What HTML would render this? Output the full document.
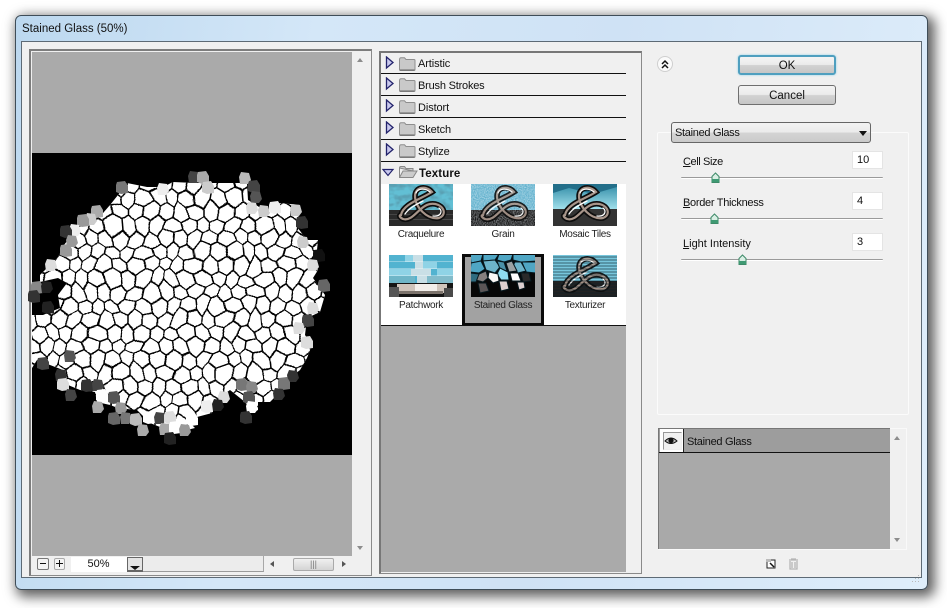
<!DOCTYPE html>
<html><head><meta charset="utf-8"><title>Stained Glass</title>
<style>
html,body{margin:0;padding:0;background:#fff}
body{width:947px;height:608px;position:relative;overflow:hidden;font:11px "Liberation Sans",sans-serif;color:#111}
div,span.a{position:absolute;box-sizing:border-box}
.t{white-space:nowrap;line-height:14px}
.win{left:15px;top:15px;width:913px;height:575px;border:1px solid #3f4d58;border-radius:6px;background:linear-gradient(100deg,#bcd8ef 0,#d4e7f8 30%,#cfe2f5 60%,#dfeefb 100%);box-shadow:4px 4px 12px 3px rgba(0,0,0,.62)}
.client{left:21px;top:41px;width:901px;height:537px;background:#f0f0f0;border:1px solid #5d6a75}
.row{left:381px;width:245px;height:22px;background:#f0f0f0;border-bottom:1.5px solid #111}
.row .t{left:37px;top:5px;letter-spacing:-.1px}
.btn{left:738px;width:98px;height:20px;border:1px solid #6f6f6f;border-radius:3px;background:linear-gradient(#f4f4f4 0,#ebebeb 48%,#d2d2d2 52%,#c6c6c6 100%);text-align:center;line-height:20px;font-size:11.5px}
.inp{left:852px;width:31px;height:18px;background:#fff;border:1px solid #e4e4e4;padding-left:4px;line-height:16px}
.sl{left:681px;width:202px;height:2px;background:#9a9a9a;border-bottom:1px solid #fff;border-radius:1px}
.lbl{left:683px}
.th{width:64px;height:42px;overflow:hidden}
.cap{width:82px;text-align:center;font-size:10px;color:#222;line-height:12px;letter-spacing:-.3px}
u{text-decoration:underline}
</style></head><body>
<div class="win"></div>
<div class="t" style="left:22px;top:22px;font-size:11.5px;color:#111">Stained Glass (50%)</div>
<div class="client"></div>

<!-- Preview panel -->
<div style="left:29px;top:49px;width:343px;height:527px;border:2px solid #7d7d7d;border-bottom:1px solid #8a8a8a;border-right:1px solid #8a8a8a;background:#f0f0f0"></div>
<div style="left:32px;top:52px;width:320px;height:504px;background:#aaa"></div>

<svg width="947" height="608" style="position:absolute;left:0;top:0">
<defs>
<path id="m" d="M1 5L8 -1L16 4L22 1L29 6L38 0L46 3L53 -1L60 5L68 1L76 5M1 5L-1 14M16 4L14 12M29 6L31 14M46 3L47 13M60 5L61 14M-1 14L7 19L14 12L23 17L31 14L37 20L47 13L54 18L61 14L69 19L74 14M7 19L9 27M23 17L22 26M37 20L38 28M54 18L52 26M69 19L67 27M0 32L9 27L15 31L22 26L30 31L38 28L45 33L52 26L61 30L67 27L75 32M0 32L2 40M15 31L16 41M30 31L29 39M45 33L46 41M61 30L59 39M2 40L8 45L16 41L24 46L29 39L37 44L46 41L53 46L59 39L68 45L77 40M8 45L8 53M24 46L22 55M37 44L38 54M53 46L53 53M68 45L68 55" fill="none" stroke="#000" stroke-width="1.500" stroke-linejoin="round"/>
<pattern id="hx" width="75" height="54" patternUnits="userSpaceOnUse">
<use href="#m"/><use href="#m" x="-75"/><use href="#m" x="75"/><use href="#m" y="-54"/><use href="#m" y="54"/><use href="#m" x="-75" y="-54"/><use href="#m" x="75" y="-54"/><use href="#m" x="-75" y="54"/><use href="#m" x="75" y="54"/>
</pattern>
<filter id="wob" x="-5%" y="-5%" width="110%" height="110%" color-interpolation-filters="sRGB">
<feTurbulence type="fractalNoise" baseFrequency="0.035" numOctaves="1" seed="11" result="n"/>
<feDisplacementMap in="SourceGraphic" in2="n" scale="14" xChannelSelector="R" yChannelSelector="G"/>
<feGaussianBlur stdDeviation=".3"/>
</filter>
<clipPath id="blob"><path d="M32 315L43 315L60 308L58 295L67 283L58 278L40 282L40 275L58 257L64 245L77 228L97 220L110 205L118 195L127 183L147 187L163 187L173 182L195 183L217 183L247 183L248 200L267 212L280 203L300 205L297 227L307 240L318 240L317 250L310 260L318 270L313 278L325 295L320 312L307 318L305 335L312 345L307 358L300 370L290 378L280 392L270 402L258 402L258 410L252 413L245 402L230 390L213 402L212 413L197 417L192 425L195 428L175 433L150 423L137 410L118 408L110 405L97 402L95 392L80 390L68 385L63 370L37 360L32 368Z"/></clipPath>
<path id="c" d="M-5 -6L3 -7L6 -2L6 5L-1 6L-6 4L-6 -3Z"/>
<path id="d" d="M-4 -6L4 -5L6 2L3 6L-5 6L-6 -1Z"/>
</defs>
<rect x="32" y="153" width="320" height="302" fill="#000"/>
<g clip-path="url(#blob)">
<rect x="20" y="170" width="320" height="275" fill="#fff"/>
<rect x="15" y="165" width="330" height="285" fill="url(#hx)" filter="url(#wob)"/>
</g>
<g>
<use href="#c" x="122" y="188" fill="#777"/><use href="#d" x="194" y="177" fill="#444"/><use href="#c" x="203" y="178" fill="#aaa"/>
<use href="#d" x="245" y="178" fill="#bbb"/><use href="#c" x="254" y="187" fill="#444"/><use href="#d" x="256" y="197" fill="#555"/>
<use href="#c" x="208" y="188" fill="#ccc"/><use href="#d" x="163" y="189" fill="#eee"/><use href="#c" x="97" y="212" fill="#aaa"/>
<use href="#d" x="91" y="219" fill="#ccc"/><use href="#c" x="83" y="221" fill="#999"/><use href="#d" x="75" y="230" fill="#eee"/>
<use href="#c" x="66" y="232" fill="#333"/><use href="#d" x="72" y="241" fill="#999"/><use href="#c" x="66" y="251" fill="#999"/>
<use href="#d" x="51" y="265" fill="#ddd"/><use href="#c" x="37" y="288" fill="#888"/><use href="#d" x="47" y="287" fill="#222"/>
<use href="#c" x="34" y="297" fill="#333"/><use href="#d" x="264" y="211" fill="#ccc"/><use href="#c" x="275" y="208" fill="#eee"/>
<use href="#d" x="296" y="210" fill="#ccc"/><use href="#c" x="302" y="223" fill="#333"/><use href="#d" x="303" y="242" fill="#ccc"/>
<use href="#c" x="319" y="256" fill="#111"/><use href="#d" x="313" y="265" fill="#ddd"/><use href="#c" x="324" y="286" fill="#666"/>
<use href="#d" x="252" y="208" fill="#ddd"/><use href="#c" x="48" y="308" fill="#222"/><use href="#d" x="70" y="356" fill="#555"/>
<use href="#c" x="43" y="364" fill="#444"/><use href="#d" x="61" y="375" fill="#333"/><use href="#c" x="63" y="385" fill="#ddd"/>
<use href="#d" x="71" y="395" fill="#444"/><use href="#c" x="87" y="386" fill="#333"/><use href="#d" x="98" y="385" fill="#444"/>
<use href="#c" x="102" y="396" fill="#fff"/><use href="#d" x="98" y="407" fill="#aaa"/><use href="#c" x="114" y="398" fill="#555"/>
<use href="#d" x="121" y="408" fill="#999"/><use href="#c" x="114" y="419" fill="#666"/><use href="#d" x="126" y="418" fill="#777"/>
<use href="#c" x="136" y="420" fill="#bbb"/><use href="#d" x="143" y="430" fill="#aaa"/><use href="#c" x="149" y="418" fill="#fff"/>
<use href="#d" x="160" y="418" fill="#444"/><use href="#c" x="170" y="418" fill="#ddd"/><use href="#d" x="165" y="429" fill="#aaa"/>
<use href="#c" x="175" y="428" fill="#fff"/><use href="#d" x="185" y="430" fill="#999"/><use href="#c" x="170" y="439" fill="#222"/>
<use href="#d" x="313" y="308" fill="#ddd"/><use href="#c" x="308" y="321" fill="#444"/><use href="#d" x="299" y="328" fill="#ddd"/>
<use href="#c" x="307" y="343" fill="#ddd"/><use href="#d" x="293" y="376" fill="#333"/><use href="#c" x="284" y="384" fill="#777"/>
<use href="#d" x="279" y="394" fill="#333"/><use href="#c" x="242" y="385" fill="#777"/><use href="#d" x="252" y="387" fill="#888"/>
<use href="#c" x="249" y="398" fill="#555"/><use href="#d" x="252" y="407" fill="#fff"/><use href="#c" x="246" y="418" fill="#333"/>
<use href="#d" x="224" y="397" fill="#ddd"/><use href="#c" x="207" y="407" fill="#eee"/><use href="#d" x="218" y="405" fill="#222"/>
<use href="#c" x="192" y="420" fill="#fff"/>
</g>
<rect x="32" y="556" width="320" height="17" fill="#f0f0f0"/>
</svg>

<!-- Preview scrollbars -->
<svg width="947" height="608" style="position:absolute;left:0;top:0">
<g fill="#8c8c8c">
<path d="M357 62L363 62L360 58Z"/><path d="M357 546L363 546L360 550Z"/>
<path d="M632 60L638 60L635 56Z"/><path d="M632 562L638 562L635 566Z"/>
</g>
<path d="M274 561V567L270 564Z" fill="#555"/><path d="M342 561V567L346 564Z" fill="#555"/>
</svg>
<div style="left:71px;top:557px;width:56px;height:15px;background:#fff"></div>
<div class="t" style="left:71px;top:557px;width:55px;text-align:center;font-size:11px">50%</div>
<div style="left:37px;top:558px;width:12px;height:12px;background:#f4f4f4;border:1px solid #777;border-radius:2px"></div>
<div style="left:40px;top:563px;width:6px;height:1px;background:#111"></div>
<div style="left:54px;top:558px;width:11px;height:12px;background:#f4f4f4;border:1px solid #aaa;border-radius:2px"></div>
<div style="left:56px;top:563px;width:7px;height:1px;background:#111"></div>
<div style="left:59px;top:560px;width:1px;height:7px;background:#111"></div>
<div style="left:127px;top:557px;width:16px;height:15px;background:#e4e4e4;border:1px solid #666;border-bottom-width:2px"></div>
<svg width="947" height="608" style="position:absolute;left:0;top:0"><path d="M130 566H140L135 570Z" fill="#111"/></svg>
<div style="left:143px;top:556px;width:121px;height:16px;background:#ececec;border-bottom:1px solid #9a9a9a;border-right:1px solid #a8a8a8"></div>
<div style="left:293px;top:558px;width:41px;height:13px;background:linear-gradient(#f0f0f0,#d4d4d4);border:1px solid #aaa;border-radius:2px"></div>
<div class="t" style="left:293px;top:557px;width:41px;text-align:center;font-size:9px;color:#777">|||</div>

<!-- Middle panel -->
<div style="left:379px;top:51px;width:263px;height:523px;border:1px solid #8a8a8a;border-top:2px solid #777;border-left:2px solid #777;background:#f0f0f0"></div>
<div style="left:381px;top:325px;width:245px;height:247px;background:#aaa;border-top:1.5px solid #111"></div>
<div style="left:381px;top:183px;width:245px;height:142px;background:#fff"></div>

<svg width="0" height="0" style="position:absolute">
<defs>
<g id="tr"><path d="M1.500 1L8 6.500L1.500 12Z" fill="#c9c9ee" stroke="#23236b" stroke-width="1.300"/></g>
<g id="fo"><path d="M.5 3V12.500Q.5 13.500 1.500 13.500H15Q16 13.500 16 12.500V3.500Q16 2.500 15 2.500H7L5.500 .8H2Q.5 .8 .5 3Z" fill="#c9c9c9" stroke="#8e8e8e"/><path d="M1 13H15.500" stroke="#666"/></g>
<g id="kn" fill="none" stroke-linecap="round">
<path d="M12 31C14 20 32 15 43 8C37 1 26 3 26 12C26 23 38 36 50 34C60 30 53 18 41 20C30 22 24 38 14 35C10 33 10 31 12 31Z" stroke="#0d0d0d" stroke-width="5.500"/>
<path d="M12 31C14 20 32 15 43 8C37 1 26 3 26 12C26 23 38 36 50 34C60 30 53 18 41 20C30 22 24 38 14 35C10 33 10 31 12 31Z" stroke="#a8958a" stroke-width="2.200"/>
<path d="M27 9C29 4 36 4 41 8M44 32C52 33 54 27 50 24M16 30C20 24 28 20 34 17" stroke="#fff" stroke-width="1.300"/>
</g>
<filter id="gr"><feTurbulence type="fractalNoise" baseFrequency="0.9" numOctaves="1" seed="3"/><feColorMatrix values="0 0 0 0 .9  0 0 0 0 .95  0 0 0 0 1  1.9 0 0 0 -.55"/></filter>
<filter id="cr" x="0" y="0" width="100%" height="100%"><feTurbulence type="fractalNoise" baseFrequency="0.13 0.18" numOctaves="2" seed="5"/><feColorMatrix values="0 0 0 0 .1  0 0 0 0 .35  0 0 0 0 .45  3 0 0 0 -1.2"/></filter>
</defs></svg>

<div class="row" style="top:53px;height:21px"><svg style="position:absolute;left:4px;top:3px" width="10" height="14"><use href="#tr"/></svg><svg style="position:absolute;left:18px;top:4px" width="17" height="15"><use href="#fo"/></svg><div class="t" style="top:4px">Artistic</div></div>
<div class="row" style="top:74px"><svg style="position:absolute;left:4px;top:3px" width="10" height="14"><use href="#tr"/></svg><svg style="position:absolute;left:18px;top:4px" width="17" height="15"><use href="#fo"/></svg><div class="t" style="letter-spacing:-.2px">Brush Strokes</div></div>
<div class="row" style="top:96px"><svg style="position:absolute;left:4px;top:3px" width="10" height="14"><use href="#tr"/></svg><svg style="position:absolute;left:18px;top:4px" width="17" height="15"><use href="#fo"/></svg><div class="t">Distort</div></div>
<div class="row" style="top:118px"><svg style="position:absolute;left:4px;top:3px" width="10" height="14"><use href="#tr"/></svg><svg style="position:absolute;left:18px;top:4px" width="17" height="15"><use href="#fo"/></svg><div class="t">Sketch</div></div>
<div class="row" style="top:140px"><svg style="position:absolute;left:4px;top:3px" width="10" height="14"><use href="#tr"/></svg><svg style="position:absolute;left:18px;top:4px" width="17" height="15"><use href="#fo"/></svg><div class="t">Stylize</div></div>
<div class="row" style="top:162px;border-bottom:0"><svg style="position:absolute;left:1px;top:6px" width="13" height="10"><path d="M1 1.500H11L6 7.500Z" fill="#c9c9ee" stroke="#23236b" stroke-width="1.200"/></svg><svg style="position:absolute;left:18px;top:3px" width="19" height="15"><path d="M.5 3V12.500H14L18 6H4L.5 12.500M14 6V3.500H7L5.500 1.500H2Q.5 1.500 .5 3Z" fill="#ccc" stroke="#888"/></svg><div class="t" style="font-weight:bold;font-size:11.500px;letter-spacing:.1px;left:38px">Texture</div></div>

<!-- Thumbs -->
<div style="left:462px;top:254px;width:82px;height:71px;background:#a2a2a2;border:3px solid #0a0a0a;border-bottom-width:2px"></div>

<svg class="th" style="position:absolute;left:389px;top:184px" width="64" height="42">
<rect width="64" height="28" fill="#62bfd4"/><rect width="64" height="28" filter="url(#cr)"/><rect y="26" width="64" height="16" fill="#2a2a2a"/><rect y="30" width="64" height="1" fill="#444"/><rect y="35" width="64" height="1" fill="#4a4a4a"/><use href="#kn"/></svg>
<svg class="th" style="position:absolute;left:471px;top:184px" width="64" height="42">
<rect width="64" height="28" fill="#5fb0cc"/><rect y="26" width="64" height="16" fill="#111"/><rect width="64" height="42" filter="url(#gr)" opacity=".55"/><use href="#kn" opacity=".9"/></svg>
<svg class="th" style="position:absolute;left:553px;top:184px" width="64" height="42">
<defs><linearGradient id="sk" x1="0" y1="0" x2="0" y2="1"><stop offset="0" stop-color="#2f8aa5"/><stop offset="1" stop-color="#a5e3ee"/></linearGradient></defs>
<rect width="64" height="26" fill="url(#sk)"/><path d="M0 9L16 4L40 10L64 3V0H0Z" fill="#236f8a"/><rect y="25" width="64" height="17" fill="#333"/><use href="#kn"/></svg>

<svg class="th" style="position:absolute;left:389px;top:255px" width="64" height="42">
<rect width="64" height="42" fill="#52b3d0"/>
<g fill="#8fd3e6"><rect x="16" width="16" height="7"/><rect x="32" y="7" width="16" height="7"/><rect x="0" y="14" width="16" height="7"/><rect x="48" y="14" width="16" height="7"/><rect x="16" y="14" width="8" height="7"/></g>
<g fill="#c9dfe6"><rect x="24" y="0" width="10" height="7"/><rect x="26" y="7" width="8" height="7"/><rect x="22" y="14" width="20" height="7"/><rect x="28" y="21" width="10" height="7"/></g>
<g fill="#fff" opacity=".35"><rect y="6" width="64" height="1"/><rect y="13" width="64" height="1"/><rect y="20" width="64" height="1"/></g>
<rect y="21" width="26" height="7" fill="#6fb6c8"/><rect x="38" y="21" width="26" height="7" fill="#82bccb"/>
<rect y="28" width="64" height="14" fill="#151515"/>
<rect x="8" y="29" width="50" height="9" fill="#cfc4bb"/><rect x="26" y="29" width="22" height="9" fill="#f2eeea"/><rect x="0" y="32" width="10" height="10" fill="#555"/><rect x="55" y="33" width="9" height="9" fill="#4a4a4a"/><rect x="10" y="36" width="44" height="3" fill="#7c736c"/>
</svg>
<svg class="th" style="position:absolute;left:471px;top:255px" width="64" height="42" stroke="#07181e" stroke-width="1">
<rect width="64" height="42" fill="#070707" stroke="none"/>
<g fill="#4fa6c4"><path d="M-1 -1H12L10 6L0 8Z"/><path d="M12 -1H28L24 5L12 6Z"/><path d="M28 -1H42L40 5L33 7L26 5Z"/><path d="M42 -1H65V6L50 7L42 5Z"/><path d="M0 8L10 6L14 14L8 18L-1 17Z"/><path d="M51 7H65V18L55 17Z"/></g>
<g fill="#6db4ca"><path d="M12 6L24 5L29 12L24 18L15 15Z"/><path d="M44 7H50L55 16L47 18L41 12Z"/></g>
<path d="M26 6L33 7L36 16L29 14Z" fill="#4a91a8"/>
<path d="M35 8L41 6L46 16L38 17Z" fill="#9ba1a2"/>
<path d="M29 13L37 17L38 25L30 25L26 19Z" fill="#8fdcef"/>
<path d="M8 19L15 16L17 23L12 27L5 25Z" fill="#857f7e"/>
<path d="M18 17L27 19L28 26L22 28L17 23Z" fill="#fbf7f5"/>
<path d="M39 18L47 18L50 26L41 26Z" fill="#fff"/>
<path d="M-1 18L8 19L5 27L-1 27Z" fill="#2f6c80"/>
<path d="M50 18H58L60 26L52 27Z" fill="#2a2a2a"/>
<path d="M28 26H36L38 34L30 36Z" fill="#ddcfce"/>
<path d="M46 27H53L54 33L48 35Z" fill="#ddd0d0"/>
<path d="M7 28H15L18 36L9 38Z" fill="#5a5556"/>
</svg>
<svg class="th" style="position:absolute;left:553px;top:255px" width="64" height="42">
<rect width="64" height="28" fill="#77c6dc"/><rect y="26" width="64" height="16" fill="#222"/>
<use href="#kn" opacity=".95"/>
<g stroke="#0b1f28" stroke-width=".9" opacity=".6"><path d="M0 2H64M0 5H64M0 8H64M0 11H64M0 14H64M0 17H64M0 20H64M0 23H64M0 26H64M0 29H64M0 32H64M0 35H64M0 38H64M0 41H64"/></g>
</svg>

<div class="cap" style="left:380px;top:229px">Craquelure</div>
<div class="cap" style="left:462px;top:229px">Grain</div>
<div class="cap" style="left:544px;top:229px">Mosaic Tiles</div>
<div class="cap" style="left:380px;top:300px">Patchwork</div>
<div class="cap" style="left:462px;top:300px">Stained Glass</div>
<div class="cap" style="left:544px;top:300px">Texturizer</div>

<!-- Right column -->
<svg width="947" height="608" style="position:absolute;left:0;top:0">
<circle cx="665" cy="64" r="7.500" fill="#fafafa" stroke="#cfcfcf"/>
<path d="M662 64L665 61L668 64M662 68L665 65L668 68" fill="none" stroke="#111" stroke-width="1.500"/>
</svg>
<div class="btn" style="top:55px;border:2px solid #4f9fbf;box-shadow:0 0 2px #8fd0e8;line-height:18px">OK</div>
<div class="btn" style="top:85px">Cancel</div>
<div style="left:657px;top:132px;width:252px;height:283px;border:1px solid #fbfbfb;border-radius:2px"></div>
<div style="left:671px;top:122px;width:200px;height:21px;border:1px solid #666;border-radius:3px;background:linear-gradient(#f3f3f3 0,#ebebeb 48%,#d4d4d4 52%,#cacaca 100%);padding-left:3px;line-height:21px;letter-spacing:-.3px">Stained Glass</div>
<svg width="947" height="608" style="position:absolute;left:0;top:0"><path d="M859 131H867L863 136Z" fill="#111"/></svg>

<div class="t lbl" style="top:155px;letter-spacing:-.4px"><u>C</u>ell Size</div>
<div class="inp" style="top:151px">10</div>
<div class="sl" style="top:177px"></div>
<div class="t lbl" style="top:196px;letter-spacing:-.3px"><u>B</u>order Thickness</div>
<div class="inp" style="top:192px">4</div>
<div class="sl" style="top:218px"></div>
<div class="t lbl" style="top:237px"><u>L</u>ight Intensity</div>
<div class="inp" style="top:233px">3</div>
<div class="sl" style="top:259px"></div>
<svg width="947" height="608" style="position:absolute;left:0;top:0">
<g fill="#d9efe4" stroke="#3d8a68" stroke-width="1">
<path d="M715.500 173L719 176.500V182.500H712V176.500Z"/><path d="M714.500 214L718 217.500V223.500H711V217.500Z"/><path d="M742.500 255L746 258.500V264.500H739V258.500Z"/>
</g>
<g fill="#3f9a73"><rect x="712" y="179" width="7" height="3"/><rect x="711" y="220" width="7" height="3"/><rect x="739" y="261" width="7" height="3"/></g>
</svg>

<!-- Effect list -->
<div style="left:658px;top:428px;width:249px;height:122px;border:1px solid #f9f9f9;background:#f0f0f0"></div>
<div style="left:658px;top:428px;width:232px;height:121px;background:#a9a9a9;border-top:1px solid #777;border-left:1px solid #777"></div>
<div style="left:659px;top:429px;width:231px;height:24px;background:#9d9d9d;border-bottom:1.5px solid #111"></div>
<div style="left:660px;top:429px;width:24px;height:23px;background:#fff;border-right:1px solid #222"></div>
<div style="left:663px;top:432px;width:19px;height:18px;background:#f1f1f1;border:1px solid #999;border-right-color:#eee;border-bottom-color:#eee"></div>
<svg width="947" height="608" style="position:absolute;left:0;top:0">
<path d="M665 441Q671 435 677 441Q671 446 665 441Z" fill="#bbb" stroke="#111"/>
<circle cx="671" cy="440.500" r="2.600" fill="#111"/>
<path d="M894 440L900 440L897 436Z" fill="#8c8c8c"/><path d="M894 538L900 538L897 542Z" fill="#8c8c8c"/>
<rect x="767" y="560" width="8" height="8" fill="#fff" stroke="#222"/><path d="M766 559h5v3h-5z" fill="#bbb"/><path d="M770 563l4 4" stroke="#111" stroke-width="1.500"/>
<path d="M789 560h9M790 561v8h7v-8M792 562v6M795 562v6M791 559h5" fill="none" stroke="#b5b5b5" stroke-width="1.300"/>
<g fill="#b9b9b9"><rect x="918" y="581" width="1" height="1"/><rect x="915" y="581" width="1" height="1"/><rect x="912" y="581" width="1" height="1"/><rect x="918" y="578" width="1" height="1"/><rect x="915" y="578" width="1" height="1"/><rect x="918" y="575" width="1" height="1"/></g>
</svg>
<div class="t" style="left:687px;top:435px;letter-spacing:-.3px">Stained Glass</div>
</body></html>
